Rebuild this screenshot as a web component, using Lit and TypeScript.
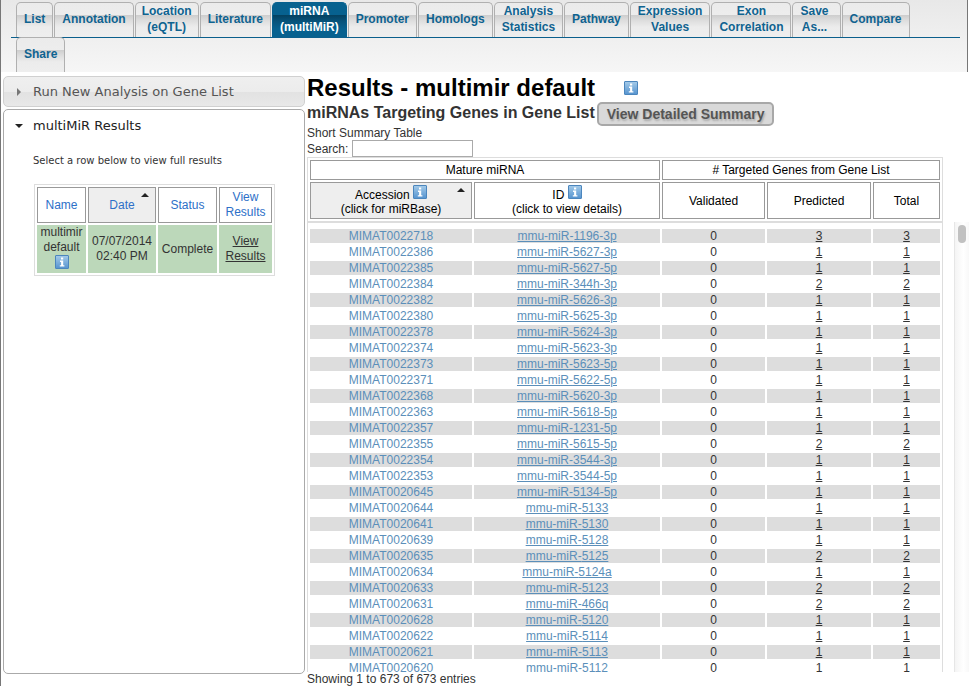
import { LitElement, html, css, svg } from "lit";
import { customElement, state } from "lit/decorators.js";
import { classMap } from "lit/directives/class-map.js";

const TABS: string[][] = [
  ["List"],
  ["Annotation"],
  ["Location", "(eQTL)"],
  ["Literature"],
  ["miRNA", "(multiMiR)"],
  ["Promoter"],
  ["Homologs"],
  ["Analysis", "Statistics"],
  ["Pathway"],
  ["Expression", "Values"],
  ["Exon", "Correlation"],
  ["Save", "As..."],
  ["Compare"],
];

// accession suffix, miRNA name suffix, predicted count
const ROWS: [string, string, number][] = [
  ["22718", "1196-3p", 3],
  ["22386", "5627-3p", 1],
  ["22385", "5627-5p", 1],
  ["22384", "344h-3p", 2],
  ["22382", "5626-3p", 1],
  ["22380", "5625-3p", 1],
  ["22378", "5624-3p", 1],
  ["22374", "5623-3p", 1],
  ["22373", "5623-5p", 1],
  ["22371", "5622-5p", 1],
  ["22368", "5620-3p", 1],
  ["22363", "5618-5p", 1],
  ["22357", "1231-5p", 1],
  ["22355", "5615-5p", 2],
  ["22354", "3544-3p", 1],
  ["22353", "3544-5p", 1],
  ["20645", "5134-5p", 1],
  ["20644", "5133", 1],
  ["20641", "5130", 1],
  ["20639", "5128", 1],
  ["20635", "5125", 2],
  ["20634", "5124a", 1],
  ["20633", "5123", 2],
  ["20631", "466q", 2],
  ["20628", "5120", 1],
  ["20622", "5114", 1],
  ["20621", "5113", 1],
  ["20620", "5112", 1],
];

@customElement("info-icon")
export class InfoIcon extends LitElement {
  static styles = css`
    :host {
      display: inline-block;
      width: 14px;
      height: 14px;
    }
    svg {
      display: block;
    }
  `;
  render() {
    return html`<svg width="14" height="14" viewBox="0 0 14 14" aria-hidden="true">
      ${svg`
        <defs>
          <linearGradient id="face" x1="0" y1="0" x2="0" y2="1">
            <stop offset="0" stop-color="#a5cbe9" />
            <stop offset="1" stop-color="#5593cf" />
          </linearGradient>
        </defs>
        <rect x="0.5" y="0.5" width="13" height="13" rx="0.5" fill="url(#face)" stroke="#4c86bd" />
        <path d="M6 2.5h2.200v2H6zM5 5.600h3.200v4.600H9.400v1.300H4.800v-1.300H6.100v-3.300H5z" fill="#fff" />
      `}
    </svg>`;
  }
}

@customElement("app-root")
export class AppRoot extends LitElement {
  @state() private active = 4;
  @state() private query = "";

  static styles = css`
    :host {
      display: flex;
      flex-direction: column;
      box-sizing: border-box;
      height: 100vh;
      border-left: 1px solid #777;
      background: #fff;
      color: #333;
      font: 12px/16px "Liberation Sans", Arial, Helvetica, sans-serif;
    }
    a {
      color: inherit;
    }
    h1,
    h2,
    h3,
    p {
      margin: 0;
    }
    .top {
      flex: none;
      box-sizing: border-box;
      margin-right: 1px;
      padding: 2px 7px 0 10px;
      border-right: 1px solid #777;
      background: linear-gradient(#e8e8e8, #f6f6f6);
    }
    .row {
      display: flex;
      gap: 1px;
      padding-left: 5px;
    }
    .row.first {
      border-bottom: 1px solid #0b5f8c;
    }
    .row.second {
      margin-top: -1px;
    }
    .tab {
      display: flex;
      align-items: center;
      box-sizing: border-box;
      height: 35px;
      padding: 0 7px 3px;
      border: 1px solid #b0b0b0;
      border-bottom: 0;
      border-radius: 5px 5px 0 0;
      background: linear-gradient(#ebebeb 0, #ededed 12px, #cdcdcd 12px, #dcdcdc 17px, #ececec 24px, #eee 100%);
      color: #0f6390;
      font-weight: bold;
      text-align: center;
      text-decoration: none;
      white-space: nowrap;
    }
    .tab.tight {
      padding: 0 6px 3px;
    }
    .tab.menu {
      padding-right: 11px;
    }
    .tab.on {
      border-color: #07618f;
      background: linear-gradient(#07628f 0, #07618f 12px, #04405f 12px, #07527a 18px, #07618f 26px);
      color: #fff;
    }
    .main {
      display: flex;
      flex: 1;
      min-height: 0;
      gap: 2px;
    }
    .side {
      display: flex;
      flex: none;
      flex-direction: column;
      gap: 2px;
      width: 302px;
      padding: 4px 0 12px 2px;
      font-family: "DejaVu Sans", Verdana, sans-serif;
    }
    .fold {
      display: flex;
      align-items: center;
      gap: 10px;
      width: 100%;
      height: 31px;
      padding: 0 11px;
      border: 0;
      background: none;
      color: #222;
      font: 13px/16px "DejaVu Sans", Verdana, sans-serif;
      text-align: left;
    }
    .fold.closed {
      border: 1px solid #d0d0d0;
      border-radius: 5px;
      background: linear-gradient(#efefef 0, #ececec 15px, #e2e2e2 15px, #e8e8e8 100%);
      color: #555;
    }
    .panel {
      flex: 1;
      border: 1px solid #aaa;
      border-radius: 5px;
    }
    .hint {
      padding: 12px 29px 15px;
      font-size: 10px;
    }
    table {
      box-sizing: border-box;
      border: 1px solid #ddd;
      border-collapse: separate;
      border-spacing: 2px;
      text-align: center;
    }
    th {
      position: relative;
      box-sizing: border-box;
      padding: 0;
      border: 1px solid #999;
      font-weight: normal;
    }
    td {
      padding: 0;
    }
    .sorted {
      background: #eee;
    }
    .sorted::after {
      content: "";
      position: absolute;
      top: 5px;
      right: 6px;
      border: 4px solid transparent;
      border-top: 0;
      border-bottom-color: #222;
    }
    .runs {
      table-layout: fixed;
      width: 241px;
      margin-left: 30px;
      font-family: "Liberation Sans", Arial, sans-serif;
      line-height: 15px;
    }
    .runs th {
      height: 36px;
      color: #2d70c8;
    }
    .runs td {
      height: 48px;
      background: #bcd8ba;
    }
    .runs .name {
      vertical-align: top;
    }
    .runs info-icon {
      display: block;
      margin: 0 auto;
    }
    .results {
      display: flex;
      flex: 1;
      flex-direction: column;
      min-width: 0;
      padding-top: 2px;
    }
    .title {
      display: flex;
      align-items: center;
      gap: 29px;
      color: #000;
      font-size: 24px;
      line-height: 28px;
    }
    .subtitle {
      display: flex;
      align-items: center;
      gap: 2px;
      height: 24px;
    }
    h2 {
      font-size: 16px;
      line-height: 24px;
      padding-bottom: 3px;
    }
    .summary {
      height: 24px;
      padding: 0 8px;
      border: 2px solid #a8a8a8;
      border-radius: 5px;
      background: #d9d9d9;
      color: #555;
      font: bold 14px/18px "Liberation Sans", Arial, sans-serif;
      text-shadow: 1px 2px 2px #aaa;
    }
    .intro {
      line-height: 14px;
    }
    .search {
      display: flex;
      align-items: center;
      gap: 4px;
    }
    .search input {
      box-sizing: border-box;
      width: 121px;
      height: 17px;
      padding: 0 2px;
      border: 1px solid #aaa;
      font: inherit;
      outline: 0;
    }
    .grid {
      table-layout: fixed;
      width: calc(100% - 26px);
      line-height: 14px;
    }
    .head {
      flex: none;
      color: #000;
    }
    .head .group {
      height: 20px;
    }
    .head .names {
      height: 37px;
    }
    .viewport {
      display: flex;
      flex: 1;
      min-height: 0;
      overflow: hidden;
    }
    .scroll {
      flex: 1;
      overflow: hidden;
    }
    .body {
      width: 100%;
    }
    .body tbody::before {
      content: "";
      display: table-row;
      height: 2px;
    }
    .body td {
      height: 14px;
    }
    .odd td {
      background: #ddd;
    }
    .id {
      color: #5b8fba;
    }
    .plain {
      text-decoration: none;
    }
    .track {
      flex: none;
      box-sizing: border-box;
      width: 15px;
      margin-left: 11px;
      padding: 3px 3px;
      border-left: 1px solid #e6e6e6;
      background: linear-gradient(90deg, #f4f4f4, #fff 60%, #f8f8f8);
    }
    .thumb {
      width: 8px;
      height: 18px;
      border-radius: 4px;
      background: #c1c1c1;
    }
    .count {
      flex: none;
      height: 14px;
      line-height: 14px;
    }
  `;

  private tab(lines: string[], index: number) {
    return html`<a
      href="#"
      class=${classMap({
        tab: true,
        on: index === this.active,
        tight: lines[0] === "Location",
        menu: lines[0] === "Save",
      })}
      @click=${(e: Event) => {
        e.preventDefault();
        this.active = index;
      }}
      >${lines[0]}${lines[1] ? html`<br />${lines[1]}` : ""}</a
    >`;
  }

  private columns() {
    return html`<colgroup>
      <col style="width:162px" />
      <col style="width:186px" />
      <col style="width:103px" />
      <col style="width:104px" />
      <col style="width:67px" />
    </colgroup>`;
  }

  render() {
    const rows = ROWS.filter(([a, n]) =>
      `MIMAT00${a} mmu-miR-${n}`.toLowerCase().includes(this.query.toLowerCase())
    );
    return html`
      <nav class="top">
        <div class="row first">${TABS.map((t, i) => this.tab(t, i))}</div>
        <div class="row second">${this.tab(["Share"], TABS.length)}</div>
      </nav>
      <main class="main">
        <aside class="side">
          <h3>
            <button class="fold closed">
              <svg width="8" height="8" viewBox="0 0 8 8" aria-hidden="true">
                <path d="M2 0l4 4-4 4z" fill="#777" />
              </svg>
              Run New Analysis on Gene List
            </button>
          </h3>
          <section class="panel">
            <h3>
              <button class="fold">
                <svg width="8" height="8" viewBox="0 0 8 8" aria-hidden="true">
                  <path d="M0 2h8l-4 4z" fill="#222" />
                </svg>
                multiMiR Results
              </button>
            </h3>
            <p class="hint">Select a row below to view full results</p>
            <table class="runs">
              <colgroup>
                <col style="width:49px" />
                <col style="width:68px" />
                <col style="width:59px" />
                <col style="width:53px" />
              </colgroup>
              <thead>
                <tr>
                  <th>Name</th>
                  <th class="sorted">Date</th>
                  <th>Status</th>
                  <th>View Results</th>
                </tr>
              </thead>
              <tbody>
                <tr>
                  <td class="name">multimir default<info-icon></info-icon></td>
                  <td>07/07/2014 02:40 PM</td>
                  <td>Complete</td>
                  <td><a href="#">View Results</a></td>
                </tr>
              </tbody>
            </table>
          </section>
        </aside>
        <section class="results">
          <h1 class="title">Results - multimir default <info-icon></info-icon></h1>
          <div class="subtitle">
            <h2>miRNAs Targeting Genes in Gene List</h2>
            <button class="summary">View Detailed Summary</button>
          </div>
          <p class="intro">Short Summary Table</p>
          <div class="search">
            <label for="search">Search:</label>
            <input
              id="search"
              type="text"
              .value=${this.query}
              @input=${(e: Event) => (this.query = (e.target as HTMLInputElement).value)}
            />
          </div>
          <table class="grid head">
            ${this.columns()}
            <thead>
              <tr>
                <th class="group" colspan="2">Mature miRNA</th>
                <th class="group" colspan="3"># Targeted Genes from Gene List</th>
              </tr>
              <tr>
                <th class="names sorted">Accession <info-icon></info-icon><br />(click for miRBase)</th>
                <th class="names">ID <info-icon></info-icon><br />(click to view details)</th>
                <th class="names">Validated</th>
                <th class="names">Predicted</th>
                <th class="names">Total</th>
              </tr>
            </thead>
          </table>
          <div class="viewport">
            <div class="scroll">
              <table class="grid body">
                ${this.columns()}
                <tbody>
                  ${rows.map(
                    ([acc, name, n], i) => html`<tr class=${classMap({ odd: i % 2 === 0 })}>
                      <td class="id"><a class="plain" href="#">MIMAT00${acc}</a></td>
                      <td class="id"><a href="#">mmu-miR-${name}</a></td>
                      <td>0</td>
                      <td><a href="#">${n}</a></td>
                      <td><a href="#">${n}</a></td>
                    </tr>`
                  )}
                </tbody>
              </table>
            </div>
            <div class="track"><div class="thumb"></div></div>
          </div>
          <p class="count">Showing 1 to 673 of 673 entries</p>
        </section>
      </main>
    `;
  }
}
